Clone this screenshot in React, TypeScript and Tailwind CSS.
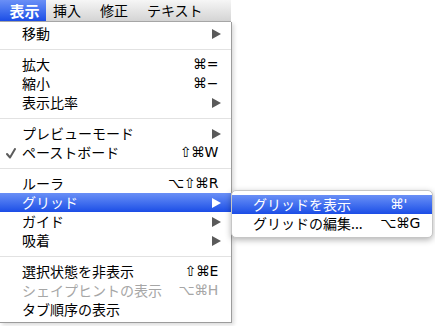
import React from "react";

const FONT = {
  fontFamily:
    '"Noto Sans CJK JP", "DejaVu Sans", "Liberation Sans", sans-serif',
};

type Item =
  | { type: "sep" }
  | {
      type: "item";
      label: string;
      shortcut?: string;
      arrow?: boolean;
      checked?: boolean;
      disabled?: boolean;
      active?: boolean;
    };

const ITEMS: Item[] = [
  { type: "item", label: "移動", arrow: true },
  { type: "sep" },
  { type: "item", label: "拡大", shortcut: "⌘=" },
  { type: "item", label: "縮小", shortcut: "⌘−" },
  { type: "item", label: "表示比率", arrow: true },
  { type: "sep" },
  { type: "item", label: "プレビューモード", arrow: true },
  { type: "item", label: "ペーストボード", shortcut: "⇧⌘W", checked: true },
  { type: "sep" },
  { type: "item", label: "ルーラ", shortcut: "⌥⇧⌘R" },
  { type: "item", label: "グリッド", arrow: true, active: true },
  { type: "item", label: "ガイド", arrow: true },
  { type: "item", label: "吸着", arrow: true },
  { type: "sep" },
  { type: "item", label: "選択状態を非表示", shortcut: "⇧⌘E" },
  { type: "item", label: "シェイプヒントの表示", shortcut: "⌥⌘H", disabled: true },
  { type: "item", label: "タブ順序の表示" },
];

function Arrow({ white }: { white?: boolean }) {
  return (
    <svg width="9" height="10" viewBox="0 0 9 10" className="shrink-0">
      <polygon points="0,0 9,5 0,10" fill={white ? "#ffffff" : "#5a5a5a"} />
    </svg>
  );
}

function Check() {
  return (
    <svg width="10" height="11" viewBox="0 0 10 11">
      <path
        d="M1 6 L4 9.5 L9 1"
        fill="none"
        stroke="#5c5c5c"
        strokeWidth="2"
        strokeLinecap="round"
        strokeLinejoin="round"
      />
    </svg>
  );
}

function Shortcut({ keys, className = "" }: { keys: string; className?: string }) {
  return (
    <span
      className={`whitespace-nowrap text-[14px] tracking-[-0.4px] ${className}`}
      style={{ fontFamily: '"DejaVu Sans", "Liberation Sans", sans-serif' }}
    >
      {keys}
    </span>
  );
}

function MenuRow({ item }: { item: Extract<Item, { type: "item" }> }) {
  const textColor = item.active
    ? "text-white"
    : item.disabled
    ? "text-[#a6a6a6]"
    : "text-black";
  return (
    <div
      className={`flex h-[19px] items-center text-[14px] leading-[19px] ${textColor} ${
        item.active ? "bg-gradient-to-b from-[#6a8ff6] to-[#1b4ce6]" : ""
      }`}
    >
      <span className="flex w-[22px] shrink-0 justify-center pt-[1px]">
        {item.checked && <Check />}
      </span>
      <span className="flex-1 whitespace-nowrap">{item.label}</span>
      {item.shortcut && <Shortcut keys={item.shortcut} className="pr-[13px]" />}
      {item.arrow && (
        <span className="flex pr-[10px]">
          <Arrow white={item.active} />
        </span>
      )}
    </div>
  );
}

export default function App() {
  return (
    <div
      className="relative h-[326px] w-[435px] overflow-hidden bg-white"
      style={FONT}
    >
      {/* menu bar */}
      <div className="flex h-[22px] w-[231px] items-stretch border-b border-[#a9a9a9] bg-gradient-to-b from-[#f6f6f6] to-[#d4d4d4] text-[14px] leading-[21px] text-black">
        <div className="flex w-[46px] items-center justify-center bg-gradient-to-b from-[#6a8ff6] to-[#1b4ce6] pl-[3px] text-[15px] font-bold text-white">
          表示
        </div>
        <div className="flex items-center gap-[19px] pl-[7px]">
          <span>挿入</span>
          <span>修正</span>
          <span>テキスト</span>
        </div>
      </div>

      {/* dropdown */}
      <div className="flex w-[232px] flex-col border-r border-b border-[#9c9c9c] bg-white pt-[2px] pb-[3px] shadow-[2px_2px_4px_rgba(0,0,0,0.15)]">
        {ITEMS.map((item, i) =>
          item.type === "sep" ? (
            <div key={i} className="flex h-[12px] items-center">
              <div className="h-px w-full bg-[#e2e2e2]" />
            </div>
          ) : (
            <MenuRow key={i} item={item} />
          )
        )}
      </div>

      {/* submenu */}
      <div className="absolute left-[231px] top-[190px] flex w-[202px] flex-col rounded-[5px] border border-[#c6c6c6] bg-white pt-[4px] pb-[4px] text-[14px] leading-[19px] shadow-[0_2px_6px_rgba(0,0,0,0.3)]">
        <div className="flex h-[19px] items-center bg-gradient-to-b from-[#6a8ff6] to-[#1b4ce6] pl-[21px] text-white">
          <span className="flex-1 whitespace-nowrap">グリッドを表示</span>
          <Shortcut keys="⌘'" className="pr-[25px]" />
        </div>
        <div className="flex h-[19px] items-center pl-[21px] text-black">
          <span className="flex-1 whitespace-nowrap">グリッドの編集...</span>
          <Shortcut keys="⌥⌘G" className="pr-[12px]" />
        </div>
      </div>
    </div>
  );
}
